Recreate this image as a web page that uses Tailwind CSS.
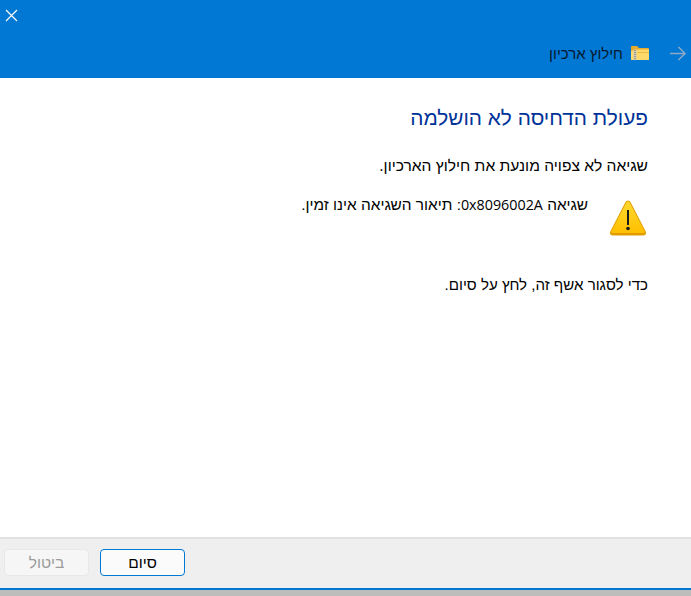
<!DOCTYPE html>
<html lang="he" dir="rtl">
<head>
  <meta charset="UTF-8" />
  <title>חילוץ ארכיון</title>
  <script src="https://cdn.jsdelivr.net/npm/@tailwindcss/browser@4"></script>
</head>
<body class="h-[596px] w-[691px] overflow-hidden bg-[#bdbdbb] font-['Liberation_Sans',sans-serif] text-[#000]">
  <div class="flex h-[590px] flex-col border-b-2 border-[#0078d4] bg-white">
    <!-- title bar -->
    <header class="relative h-[78px] shrink-0 bg-[#0078d4]">
      <svg class="absolute left-[5px] top-[9px]" width="13" height="13" viewBox="0 0 13 13" fill="none" stroke="#fff" stroke-width="1.2"><path d="M1 1l11 11M12 1L1 12"/></svg>
      <div class="flex h-full items-start pr-[5px] pt-[46px]">
        <svg width="16" height="15" viewBox="0 0 16 15" fill="none" stroke="#8fa9c4" stroke-width="1.5"><path d="M0 7.500h15M8.500 1l6.500 6.500L8.500 14"/></svg>
        <svg class="mr-[21px]" width="18" height="14" viewBox="0 0 18 14">
          <path d="M0 1a1 1 0 0 1 1-1h5l2 2h9a1 1 0 0 1 1 1v10a1 1 0 0 1-1 1H1a1 1 0 0 1-1-1z" fill="#e9a92c"/>
          <path d="M0 5l6-1.500h12V13a1 1 0 0 1-1 1H1a1 1 0 0 1-1-1z" fill="#fdd96b"/>
          <path d="M6 6h12v1H6z" fill="#f3b93f"/>
          <path d="M2.500 3.500h3V14h-3z" fill="#cfccba"/>
          <path d="M3.500 4h1v1h-1zM3.500 6h1v1h-1zM3.500 8h1v1h-1zM3.500 10h1v1h-1zM3.500 12h1v1h-1z" fill="#6f6a58"/>
        </svg>
        <span class="mr-[8px] -mt-[2px] text-[15px] leading-[20px] text-[#051a30]">חילוץ ארכיון</span>
      </div>
    </header>

    <!-- content -->
    <main class="flex-1 pr-[43px] pt-[27px]">
      <h1 class="text-[20.800px] leading-[26px] font-normal text-[#003399]">פעולת הדחיסה לא הושלמה</h1>
      <p class="mt-[25px] text-[15.600px] leading-[20px]">שגיאה לא צפויה מונעת את חילוץ הארכיון.</p>
      <div class="mt-[19px] flex items-start">
        <svg class="mr-[1px] mt-[5px] shrink-0" width="38" height="38" viewBox="0 0 38 38">
          <defs>
            <linearGradient id="warn" x1="0" y1="0" x2="0" y2="1">
              <stop offset="0" stop-color="#ffd92e"/>
              <stop offset="1" stop-color="#ffbf00"/>
            </linearGradient>
          </defs>
          <path d="M19 .5c1.200 0 2 .7 2.600 1.800l15 29c1 2 0 4.200-2 4.200H3.400c-2 0-3-2.200-2-4.200l15-29C17 1.200 17.800.5 19 .5z" fill="#e09c00"/>
          <path d="M19 1.500c.8 0 1.400.5 1.900 1.400l14.600 28c.8 1.600.2 2.100-1.400 2.100H3.900c-1.600 0-2.200-.5-1.400-2.100l14.600-28c.5-.9 1.100-1.400 1.900-1.400z" fill="url(#warn)"/>
          <path d="M18 10h2v15h-2z" fill="#1a1a1a"/>
          <circle cx="19" cy="28.500" r="1.800" fill="#1a1a1a"/>
        </svg>
        <p class="mr-[21px] text-[15.400px] leading-[20px]">שגיאה <span class="font-['Open_Sans',sans-serif] text-[14.300px]">0x8096002A</span>: תיאור השגיאה אינו זמין.</p>
      </div>
      <p class="mt-[37px] text-[15.100px] leading-[20px]">כדי לסגור אשף זה, לחץ על סיום.</p>
    </main>

    <!-- footer -->
    <footer class="flex h-[51px] shrink-0 items-start justify-end gap-[11px] border-t-2 border-[#e2e2e2] bg-[#efefef] pl-[4px] pt-[10px]">
      <button class="h-[27px] w-[85px] rounded-[4px] border-[1.500px] border-[#0078d4] bg-[#fbfbfb] text-[15.500px] leading-none">סיום</button>
      <button class="h-[27px] w-[85px] rounded-[4px] border border-[#e8e8e8] bg-[#f6f6f6] text-[15.500px] leading-none text-[#9b9b9b]">ביטול</button>
    </footer>
  </div>
</body>
</html>
